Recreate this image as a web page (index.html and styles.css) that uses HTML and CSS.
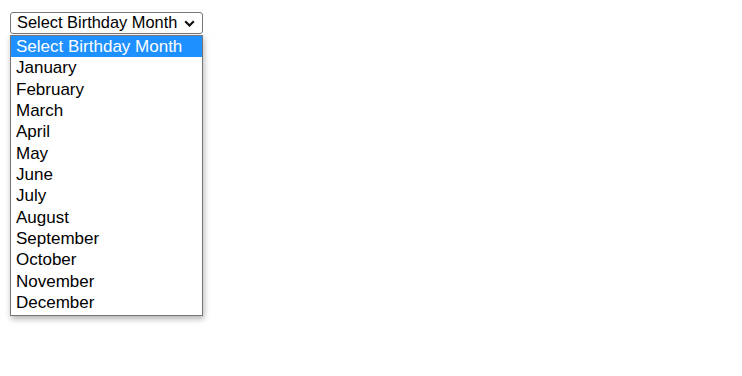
FILE: index.html
```html
<!DOCTYPE html>
<html lang="en">
<head>
    <meta charset="UTF-8">
    <title>Birthday Month</title>
    <link rel="stylesheet" href="styles.css">
</head>
<body>
    <div class="picker">
        <div class="select-box">
            <span>Select Birthday Month</span>
            <svg class="chevron" width="11" height="7" viewBox="0 0 11 7">
                <path d="M1.2 1.2 L5.5 5.5 L9.8 1.2" fill="none" stroke="#111" stroke-width="2.2"/>
            </svg>
        </div>
        <ul class="options">
            <li class="selected">Select Birthday Month</li>
            <li>January</li>
            <li>February</li>
            <li>March</li>
            <li>April</li>
            <li>May</li>
            <li>June</li>
            <li>July</li>
            <li>August</li>
            <li>September</li>
            <li>October</li>
            <li>November</li>
            <li>December</li>
        </ul>
    </div>
</body>
</html>
```

FILE: styles.css
```css
body {
    margin: 0;
    padding: 12px 10px;
    font-family: 'Liberation Sans', Arial, sans-serif;
    font-size: 17px;
    color: #000;
    background-color: #fff;
}
.picker {
    width: 193px;
}
.select-box {
    box-sizing: border-box;
    height: 22px;
    border: 1px solid #767676;
    border-radius: 3px;
    display: flex;
    align-items: center;
    justify-content: space-between;
    padding: 0 7px 1px 6px;
    font-size: 16.4px;
    line-height: 1;
    white-space: nowrap;
}
.chevron {
    flex-shrink: 0;
    margin-top: 2px;
}
.options {
    list-style: none;
    margin: 1px 0 0;
    padding: 0 0 2px;
    box-sizing: border-box;
    border: 1px solid #767676;
    box-shadow: 1px 3px 6px rgba(0, 0, 0, 0.3);
    background-color: #fff;
}
.options li {
    height: 21.33px;
    line-height: 21px;
    padding-left: 5px;
    white-space: nowrap;
}
.options .selected {
    background-color: #1e90ff;
    color: #fff;
}
```
